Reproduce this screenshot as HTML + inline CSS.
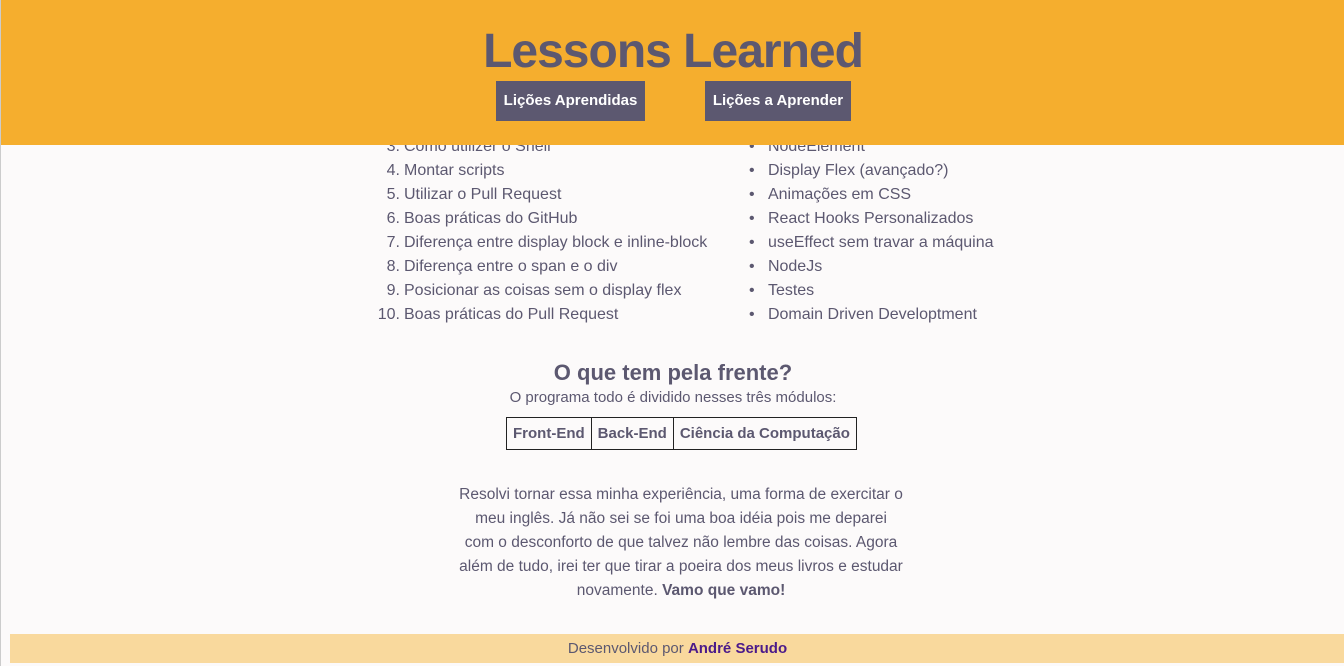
<!DOCTYPE html>
<html><head><meta charset="utf-8"><style>
body{margin:0;width:1344px;height:666px;background:#fcfafa;font-family:"Liberation Sans",sans-serif;color:#5c5870;position:relative;overflow:hidden;border-left:1px solid #ccc;box-sizing:border-box}
.hdr{position:absolute;left:0;top:0;width:1344px;height:145px;background:#f5ae2e;z-index:2}
h1{position:absolute;top:24px;left:0;width:1344px;text-align:center;margin:0;font-size:48px;font-weight:bold;color:#5c5870;letter-spacing:-1px}
.btn{position:absolute;top:81px;height:40px;background:#5c5870;color:#fff;font-weight:bold;font-size:15px;line-height:40px;text-align:center}
.l{position:absolute;font-size:16px;line-height:24px;white-space:nowrap}
.num{position:absolute;width:30px;text-align:right}
.c{position:absolute;left:0;width:1344px;text-align:center}
table{border-collapse:collapse;position:absolute;left:505px;top:417px}
td{border:1px solid #222;padding:0 6px;height:31px;font-weight:bold;font-size:15px}
.ft{position:absolute;left:9px;top:634px;width:1335px;height:29px;background:#f9d99d;text-align:center;line-height:29px;font-size:15px}
</style></head><body>
<div class="hdr"><h1>Lessons Learned</h1>
<div class="btn" style="left:495px;width:149px">Lições Aprendidas</div>
<div class="btn" style="left:704px;width:146px">Lições a Aprender</div></div>
<div class="l" style="left:369px;top:135px">
<div><span class="num">3.</span><span style="margin-left:34px">Como utilizer o Shell</span></div>
<div><span class="num">4.</span><span style="margin-left:34px">Montar scripts</span></div>
<div><span class="num">5.</span><span style="margin-left:34px">Utilizar o Pull Request</span></div>
<div><span class="num">6.</span><span style="margin-left:34px">Boas práticas do GitHub</span></div>
<div><span class="num">7.</span><span style="margin-left:34px">Diferença entre display block e inline-block</span></div>
<div><span class="num">8.</span><span style="margin-left:34px">Diferença entre o span e o div</span></div>
<div><span class="num">9.</span><span style="margin-left:34px">Posicionar as coisas sem o display flex</span></div>
<div><span class="num">10.</span><span style="margin-left:34px">Boas práticas do Pull Request</span></div>
</div>
<div class="l" style="left:748px;top:135px">
<div>•&nbsp;&nbsp;&nbsp;NodeElement</div><div>•&nbsp;&nbsp;&nbsp;Display Flex (avançado?)</div><div>•&nbsp;&nbsp;&nbsp;Animações em CSS</div><div>•&nbsp;&nbsp;&nbsp;React Hooks Personalizados</div><div>•&nbsp;&nbsp;&nbsp;useEffect sem travar a máquina</div><div>•&nbsp;&nbsp;&nbsp;NodeJs</div><div>•&nbsp;&nbsp;&nbsp;Testes</div><div>•&nbsp;&nbsp;&nbsp;Domain Driven Developtment</div>
</div>
<div class="c" style="top:360px;font-size:22px;font-weight:bold">O que tem pela frente?</div>
<div class="c" style="top:389px;font-size:15px">O programa todo é dividido nesses três módulos:</div>
<table><tr><td>Front-End</td><td>Back-End</td><td>Ciência da Computação</td></tr></table>
<div class="c" style="left:8px;top:483px;font-size:15.5px;line-height:24px;white-space:nowrap">Resolvi tornar essa minha experiência, uma forma de exercitar o<br>meu inglês. Já não sei se foi uma boa idéia pois me deparei<br>com o desconforto de que talvez não lembre das coisas. Agora<br>além de tudo, irei ter que tirar a poeira dos meus livros e estudar<br>novamente. <b>Vamo que vamo!</b></div>
<div class="ft">Desenvolvido por <b style="color:#4b1a8a">André Serudo</b></div>
</body></html>
